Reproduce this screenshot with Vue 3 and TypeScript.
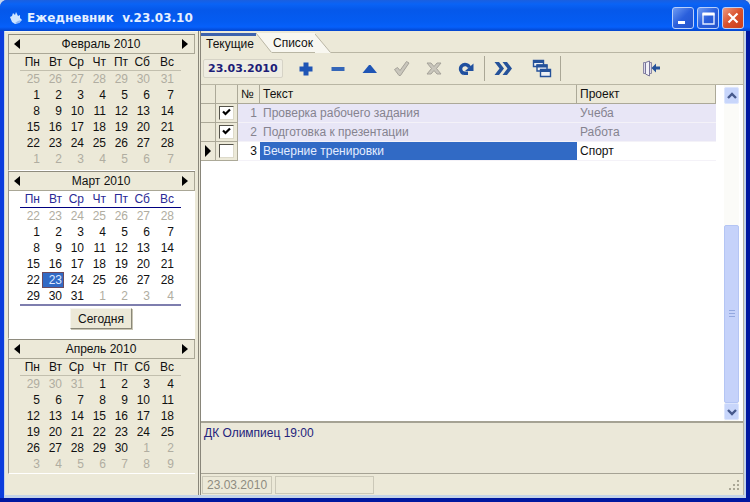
<script setup lang="ts">
import { ref } from 'vue'

interface Day {
  n: number
  out: boolean
  selected: boolean
}

interface Month {
  title: string
  current: boolean
  weeks: Day[][]
}

interface Task {
  id: number
  text: string
  project: string
  done: boolean
}

const weekdays = ['Пн', 'Вт', 'Ср', 'Чт', 'Пт', 'Сб', 'Вс']
const names = ['Январь', 'Февраль', 'Март', 'Апрель', 'Май']
const today = new Date(2010, 2, 23)

function buildMonth(year: number, month: number, lead: number): Month {
  const weeks: Day[][] = []
  for (let w = 0; w < 6; w++) {
    const row: Day[] = []
    for (let d = 0; d < 7; d++) {
      const date = new Date(year, month, 1 - lead + w * 7 + d)
      row.push({
        n: date.getDate(),
        out: date.getMonth() !== month,
        selected: date.getTime() === today.getTime(),
      })
    }
    weeks.push(row)
  }
  return { title: `${names[month]} ${year}`, current: month === today.getMonth(), weeks }
}

const months: Month[] = [buildMonth(2010, 1, 7), buildMonth(2010, 2, 7), buildMonth(2010, 3, 3)]

const tasks = ref<Task[]>([
  { id: 1, text: 'Проверка рабочего задания', project: 'Учеба', done: true },
  { id: 2, text: 'Подготовка к презентации', project: 'Работа', done: true },
  { id: 3, text: 'Вечерние тренировки', project: 'Спорт', done: false },
])
const active = ref(3)
const note = ref('ДК Олимпиец 19:00')
</script>

<template>
  <div class="window">
    <header class="titlebar">
      <svg class="logo" viewBox="0 0 14 14" aria-hidden="true">
        <path d="M1 6 L3 5 L4 2 L6 4 L7 1 L9 5 L11 4 L11 7 L13 9 L10 12 L6 13 L3 11 Z" fill="#cfe4ff" />
        <path d="M6 12 L10 12 L12 9 L9 10 Z" fill="#8fb6f5" />
      </svg>
      <h1>Ежедневник&nbsp; v.23.03.10</h1>
      <div class="winbtns">
        <button type="button" aria-label="Свернуть">
          <svg viewBox="0 0 18 18"><path d="M4 12h7v3H4z" fill="#fff" /></svg>
        </button>
        <button type="button" aria-label="Развернуть">
          <svg viewBox="0 0 18 18"><path d="M4 5h11v10H4z" fill="none" stroke="#e4edff" stroke-width="1.4" /><path d="M3.500 3.500h12v3h-12z" fill="#fff" /></svg>
        </button>
        <button type="button" class="close" aria-label="Закрыть">
          <svg viewBox="0 0 18 18"><path d="M4.500 4.500l9 9M13.500 4.500l-9 9" stroke="#fff" stroke-width="2.200" /></svg>
        </button>
      </div>
    </header>

    <div class="body">
      <aside class="side">
        <section v-for="m in months" :key="m.title" class="cal" :class="{ current: m.current }">
          <div class="calhead">
            <button type="button" aria-label="Предыдущий месяц">
              <svg viewBox="0 0 6 10"><path d="M6 0v10L0 5z" /></svg>
            </button>
            <span>{{ m.title }}</span>
            <button type="button" aria-label="Следующий месяц">
              <svg viewBox="0 0 6 10"><path d="M0 0v10l6-5z" /></svg>
            </button>
          </div>
          <div class="calbody">
            <table>
              <thead>
                <tr><th v-for="w in weekdays" :key="w">{{ w }}</th></tr>
              </thead>
              <tbody>
                <tr v-for="(week, i) in m.weeks" :key="i">
                  <td v-for="(d, j) in week" :key="j" :class="{ out: d.out, sel: d.selected }">{{ d.n }}</td>
                </tr>
              </tbody>
            </table>
          </div>
          <button v-if="m.current" type="button" class="today">Сегодня</button>
        </section>
      </aside>

      <main class="main">
        <div class="tabs" role="tablist">
          <button type="button" role="tab" aria-selected="true" class="tab on">Текущие</button>
          <svg class="edge" viewBox="0 0 16 20" aria-hidden="true">
            <path d="M0 0H16V20z" fill="#f8f7f0" />
            <path d="M0 0L15.500 19.500" stroke="#b9b6a4" fill="none" />
          </svg>
          <button type="button" role="tab" aria-selected="false" class="tab">Список</button>
          <svg class="edge" viewBox="0 0 16 20" aria-hidden="true">
            <path d="M0 1L16 20H0z" fill="#f8f7f0" />
            <path d="M0 1L15.500 19.500" stroke="#b9b6a4" fill="none" />
          </svg>
        </div>

        <div class="toolbar">
          <output class="date">23.03.2010</output>
          <button type="button" aria-label="Добавить">
            <svg viewBox="0 0 20 20"><path d="M7.500 3.500h5v4h4v5h-4v4h-5v-4h-4v-5h4z" fill="#1f55b5" /></svg>
          </button>
          <button type="button" aria-label="Удалить">
            <svg viewBox="0 0 20 20"><path d="M3.500 8h13v4h-13z" fill="#3466b8" /></svg>
          </button>
          <button type="button" aria-label="Изменить">
            <svg viewBox="0 0 20 20"><path d="M2.500 14L9 6h1.500L17 14z" fill="#1f55b5" /></svg>
          </button>
          <button type="button" aria-label="Сохранить">
            <svg viewBox="0 0 20 20"><path d="M2.500 10.500l3-2 2.500 3 6.500-9 2.500 1.500L8.500 16.500H7z" fill="#c9c6bc" stroke="#a5a299" /></svg>
          </button>
          <button type="button" aria-label="Отменить">
            <svg viewBox="0 0 20 20"><path d="M3 4h4l3 3.500L13 4h4l-4.500 5.500L17 15h-4l-3-3.500L7 15H3l4.500-5.500z" fill="#c9c6bc" stroke="#a5a299" /></svg>
          </button>
          <button type="button" aria-label="Обновить">
            <svg viewBox="0 0 20 20"><path d="M8 14.500A4.600 4.600 0 1 1 13.500 8.500" fill="none" stroke="#20509f" stroke-width="3.400" /><path d="M9 12h8.500V4.500z" fill="#20509f" /><path d="M7 12.500h5v3.500H8z" fill="#20509f" /></svg>
          </button>
          <i class="sep"></i>
          <button type="button" aria-label="Далее">
            <svg viewBox="0 0 20 20"><path d="M1.500 3h4.500l5 6.500-5 6.500H1.500l5-6.500zM9.500 3h4.500l5 6.500-5 6.500H9.500l5-6.500z" fill="#25529a" /></svg>
          </button>
          <i class="gap"></i>
          <button type="button" aria-label="Окна">
            <svg viewBox="0 0 20 20">
              <g fill="#eef1f4" stroke="#25529a" stroke-width="1.400">
                <path d="M1.500 1.500h10v6h-10z" /><path d="M1 2.500h11" stroke-width="3" />
                <path d="M5 6h10v6h-10z" /><path d="M4.500 7h11" stroke-width="3" />
                <path d="M8.500 10.500h10v7h-10z" /><path d="M8 11.500h11" stroke-width="3" />
              </g>
            </svg>
          </button>
          <i class="sep"></i>
          <button type="button" class="exit" aria-label="Выход">
            <svg viewBox="0 0 20 20">
              <path d="M2.500 3.500h8v11h-8z" fill="#dcd9ea" stroke="#8b88a5" />
              <path d="M4.500 3.500L8.500 2v15l-4-2z" fill="#f2f1f6" stroke="#77749a" />
              <path d="M10.500 9L15 4.500v3h4v3h-4v3z" fill="#25529a" />
            </svg>
          </button>
        </div>

        <div class="gridarea">
          <table class="grid">
            <colgroup>
              <col class="c-ind" /><col class="c-chk" /><col class="c-no" /><col /><col class="c-proj" />
            </colgroup>
            <thead>
              <tr><th></th><th></th><th>№</th><th>Текст</th><th>Проект</th></tr>
            </thead>
            <tbody>
              <tr v-for="t in tasks" :key="t.id" :class="{ done: t.done, active: t.id === active }">
                <td class="fix ind">
                  <svg v-if="t.id === active" viewBox="0 0 6 12"><path d="M0 0l6 6-6 6z" /></svg>
                </td>
                <td class="fix chk">
                  <input v-model="t.done" type="checkbox" :aria-label="t.text" />
                  <svg v-if="t.done" class="tick" viewBox="0 0 9 9"><path d="M1 3.500L3.500 6 8 1.500" fill="none" stroke="#000" stroke-width="2.200" /></svg>
                </td>
                <td class="no">{{ t.id }}</td>
                <td class="text">{{ t.text }}</td>
                <td>{{ t.project }}</td>
              </tr>
            </tbody>
          </table>
          <div class="scroll">
            <button type="button" aria-label="Вверх">
              <svg viewBox="0 0 10 8"><path d="M1 6l4-4 4 4" fill="none" stroke="#46598c" stroke-width="2.400" /></svg>
            </button>
            <div class="space"></div>
            <div class="thumb"><i></i><i></i><i></i></div>
            <button type="button" aria-label="Вниз">
              <svg viewBox="0 0 10 8"><path d="M1 2l4 4 4-4" fill="none" stroke="#46598c" stroke-width="2.400" /></svg>
            </button>
          </div>
        </div>

        <textarea v-model="note" class="memo" aria-label="Заметка"></textarea>

        <footer class="status">
          <span class="cell">23.03.2010</span>
          <span class="cell wide"></span>
          <svg class="grip" viewBox="0 0 12 12" aria-hidden="true">
            <path d="M9 1h2v2H9zM5 5h2v2H5zM9 5h2v2H9zM1 9h2v2H1zM5 9h2v2H5zM9 9h2v2H9z" fill="#aaa796" />
          </svg>
        </footer>
      </main>
    </div>
  </div>
</template>

<style>
body {
  margin: 0;
  background: #c5d6ee;
}
</style>

<style scoped>
.window,
.window * {
  box-sizing: border-box;
}

.window {
  display: flex;
  flex-direction: column;
  min-height: 100vh;
  padding: 0 4px 4px;
  border-radius: 7px 7px 0 0;
  background: linear-gradient(#0018a0, #0018a0) bottom / 100% 4px no-repeat,
    linear-gradient(90deg, #0b3ddd 50%, #0018a0 50%);
  font: 12px/16px "Liberation Sans", Arial, sans-serif;
  color: #111;
  overflow: hidden;
}

button,
textarea {
  font: inherit;
  color: inherit;
  margin: 0;
  padding: 0;
  border: 0;
  background: none;
}

svg {
  display: block;
}

.titlebar {
  display: flex;
  align-items: center;
  gap: 4px;
  height: 31px;
  margin: 0 -4px;
  padding: 4px 6px 0 9px;
  background: linear-gradient(#1a5fe0 0, #0a63f5 4px, #0558ea 10px, #045cf2 22px, #0660fb 27px, #0344cc 31px);
}

.logo {
  width: 14px;
  height: 14px;
}

.titlebar h1 {
  flex: 1;
  margin: 0;
  font: bold 12px/18px "DejaVu Sans", Verdana, sans-serif;
  color: #e6f0ff;
}

.winbtns {
  display: flex;
  gap: 3px;
}

.winbtns button {
  width: 22px;
  height: 22px;
  padding: 1px;
  border: 1px solid #b9d0fa;
  border-radius: 3px;
  background: linear-gradient(135deg, #6f9cf3, #2a5fdc 50%, #2354cc);
}

.winbtns .close {
  background: linear-gradient(135deg, #ee9a80, #d9502c 50%, #c9401c);
}

.body {
  flex: 1;
  display: flex;
  background: #ece9d8;
  border: solid #c3d3e8;
  border-width: 0 2px 3px 1px;
}

.side {
  flex: none;
  width: 193px;
  padding: 2px 3px 0;
  border-top: 1px solid #f7f6ee;
}

.cal {
  padding-bottom: 3px;
  border-left: 1px solid #9a978a;
  border-top: 1px solid #8e8b7e;
  border-bottom: 1px solid #fff;
}

.cal.current {
  padding-bottom: 9px;
  background: #fff;
}

.cal:last-child {
  padding-bottom: 1px;
}

.calhead {
  display: flex;
  align-items: center;
  justify-content: space-between;
  height: 19px;
  padding: 0 6px 0 5px;
  background: #ece9d8;
  border: solid #aaa796;
  border-width: 0 1px 1px 0;
}

.calhead svg {
  width: 6px;
  height: 10px;
}

.calbody {
  padding: 0 14px 0 11px;
}

.calbody table {
  width: 100%;
  table-layout: fixed;
  border-collapse: collapse;
}

.calbody thead tr {
  border-bottom: 1px solid #c2bfae;
}

.calbody th,
.calbody td {
  height: 16px;
  padding: 0 2px 0 0;
  font-weight: normal;
  line-height: 16px;
  text-align: right;
}

.calbody th {
  width: 22px;
}

.calbody th:last-child,
.calbody td:last-child {
  width: auto;
  padding-right: 7px;
}

.calbody .out {
  color: #b0ada1;
}

.current thead tr {
  border-bottom-color: #000080;
}

.current th {
  color: #2a2a96;
}

.current tbody {
  border-bottom: 2px solid #7e7eae;
}

.calbody .sel {
  color: #dfe9ff;
  background: #316ac5;
  outline: 1px solid #6b4a5e;
  outline-offset: -1px;
}

.today {
  display: block;
  width: 62px;
  height: 21px;
  margin: 2px auto 0 61px;
  background: #ece9d8;
  border: 1px solid;
  border-color: #f6f5ee #8a8778 #8a8778 #f6f5ee;
  box-shadow: 1px 1px 0 #c8c5b4;
}

.main {
  flex: 1;
  min-width: 0;
  display: flex;
  flex-direction: column;
  border-left: 3px double #89867a;
  border-right: 1px solid #b6b3a4;
}

.tabs {
  display: flex;
  height: 22px;
  padding-top: 2px;
  background: linear-gradient(#b9b6a4, #b9b6a4) 71px 21px / 100% 1px no-repeat;
}

.tab {
  height: 20px;
  padding: 0 2px 0 1px;
  background: #f8f7f0;
  border-bottom: 1px solid #b9b6a4;
}

.tab.on {
  padding: 0 2px 2px 5px;
  background: #ece9d8;
  border-top: 3px solid #3c62ad;
  border-bottom: 0;
}

.edge {
  flex: none;
  width: 16px;
  height: 20px;
}

.toolbar {
  display: flex;
  align-items: center;
  height: 32px;
  padding-left: 2px;
  border-bottom: 1px solid #b9b6a4;
}

.date {
  margin-right: 7px;
  padding: 0 4px;
  border: 1px solid #d6d3c6;
  border-radius: 2px;
  background: #efede2;
  font: bold 11px/17px "DejaVu Sans", Verdana, sans-serif;
  color: #1d1d78;
}

.toolbar button {
  display: flex;
  flex: none;
  align-items: center;
  justify-content: center;
  width: 32px;
  height: 26px;
}

.toolbar svg {
  width: 20px;
  height: 20px;
}

.sep {
  width: 1px;
  height: 25px;
  margin: 0 2px;
  background: #aaa796;
}

.gap {
  width: 7px;
}

.toolbar .exit {
  margin-left: 72px;
}

.gridarea {
  flex: 1;
  display: flex;
  align-items: stretch;
  gap: 8px;
  padding-right: 4px;
  background: #fff;
}

.grid {
  flex: 1;
  align-self: flex-start;
  width: 100%;
  table-layout: fixed;
  border-collapse: separate;
  border-spacing: 0;
}

.c-ind {
  width: 15px;
}

.c-chk {
  width: 22px;
}

.c-no {
  width: 22px;
}

.c-proj {
  width: 139px;
}

.grid th {
  height: 19px;
  padding: 0 3px;
  font-weight: normal;
  text-align: left;
  background: #ece9d8;
  border: solid #aca998;
  border-width: 0 1px 1px 0;
}

.grid td {
  height: 19px;
  padding: 0 3px;
  line-height: 18px;
  border-bottom: 1px solid #f4f2f8;
}

.grid .no {
  text-align: right;
}

.done td {
  background: #e8e6f6;
  color: #85838f;
}

.active .text {
  color: #e4edff;
  background: #316ac5;
}

.grid .fix {
  background: #ece9d8;
  border: solid #aca998;
  border-width: 0 1px 1px 0;
}

.grid .ind {
  padding: 0 0 0 4px;
}

.ind svg {
  width: 6px;
  height: 12px;
}

.grid .chk {
  position: relative;
  padding: 0 0 0 3px;
}

.chk input {
  appearance: none;
  display: block;
  width: 15px;
  height: 14px;
  margin: 0;
  background: #fff;
  border: 1px solid;
  border-color: #55534a #dddaca #dddaca #55534a;
}

.tick {
  position: absolute;
  left: 6px;
  top: 4px;
  width: 9px;
  height: 9px;
  pointer-events: none;
}

.scroll {
  flex: none;
  display: flex;
  flex-direction: column;
  width: 15px;
  padding: 2px 0 1px;
  background: #fbfbf8;
}

.scroll button {
  display: flex;
  align-items: center;
  justify-content: center;
  height: 17px;
  background: #c8d6fb;
  border: 1px solid #dce5fd;
  border-radius: 2px;
}

.scroll svg {
  width: 10px;
  height: 8px;
}

.space {
  flex: 121;
}

.thumb {
  flex: 177;
  display: flex;
  flex-direction: column;
  align-items: center;
  justify-content: center;
  gap: 2px;
  background: #c5d2fa;
  border: 1px solid #b4c5f4;
  border-radius: 2px;
}

.thumb i {
  width: 6px;
  height: 1px;
  background: #93a8e0;
}

.memo {
  display: block;
  width: 100%;
  height: 53px;
  padding: 2px 3px;
  border: solid #a5a294;
  border-width: 2px 0 1px;
  background: #ebe8d9;
  color: #23237c;
  resize: none;
  outline: 0;
}

.status {
  display: flex;
  align-items: center;
  gap: 3px;
  height: 21px;
  padding: 0 3px 0 1px;
}

.cell {
  width: 70px;
  height: 18px;
  padding: 0 4px;
  border: 1px solid #cbc8b8;
  color: #8e8b80;
}

.cell.wide {
  width: 99px;
}

.grip {
  width: 12px;
  height: 12px;
  margin-left: auto;
}
</style>
